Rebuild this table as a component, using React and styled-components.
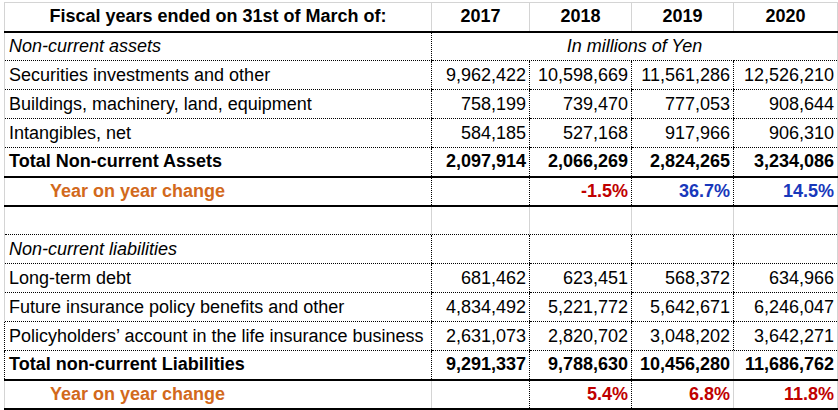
import styled, { createGlobalStyle } from "styled-components";

const GlobalStyle = createGlobalStyle`
  body {
    margin: 0;
    background: #fff;
    font-family: "Liberation Sans", Arial, sans-serif;
  }
`;

const GRID = "1px solid #d4d4d4";
const DOT = "1px dotted #000";
const THICK = "2px solid #000";

const Sheet = styled.div`
  padding: 2px 0 0 4px;
`;

const Table = styled.table`
  border-collapse: collapse;
  table-layout: fixed;
  width: 833px;
  font-size: 18px;
  color: #000;
`;

const Row = styled.tr`
  height: 29px;
`;

const Cell = styled.td`
  padding: 0 3px;
  white-space: nowrap;
  overflow: hidden;
  vertical-align: middle;
  border-left: ${(p) => p.$left || "none"};
  border-right: ${(p) => p.$right || "none"};
  border-bottom: ${(p) => p.$bottom || "none"};
  border-top: ${(p) => p.$top || "none"};
  font-weight: ${(p) => (p.$bold ? 700 : 400)};
`;

const HeadCell = styled(Cell)`
  text-align: center;
  font-weight: 700;
`;

const LabelCell = styled(Cell)`
  text-align: left;
  padding-left: ${(p) => (p.$indent ? "45px" : "4px")};
  font-style: ${(p) => (p.$italic ? "italic" : "normal")};
  color: ${(p) => p.$color || "#000"};
`;

const NoteCell = styled(Cell)`
  text-align: center;
  font-style: italic;
`;

const NumCell = styled(Cell)`
  text-align: right;
  color: ${(p) => p.$color || "#000"};
`;

const ORANGE = "#d2691c";
const RED = "#c00000";
const BLUE = "#1838bb";

const years = ["2017", "2018", "2019", "2020"];

// column borders, left of 2017 / 2018 / 2019 / 2020
const DOTS = [DOT, DOT, DOT, DOT];

const rows = [
  { type: "section", label: "Non-current assets", note: "In millions of Yen" },
  { type: "data", label: "Securities investments and other", values: ["9,962,422", "10,598,669", "11,561,286", "12,526,210"] },
  { type: "data", label: "Buildings, machinery, land, equipment", values: ["758,199", "739,470", "777,053", "908,644"] },
  { type: "data", label: "Intangibles, net", values: ["584,185", "527,168", "917,966", "906,310"] },
  { type: "total", label: "Total Non-current Assets", values: ["2,097,914", "2,066,269", "2,824,265", "3,234,086"] },
  { type: "change", label: "Year on year change", values: ["", "-1.5%", "36.7%", "14.5%"], colors: [null, RED, BLUE, BLUE] },
  { type: "spacer" },
  { type: "section", label: "Non-current liabilities", split: true },
  { type: "data", label: "Long-term debt", values: ["681,462", "623,451", "568,372", "634,966"] },
  { type: "data", label: "Future insurance policy benefits and other", values: ["4,834,492", "5,221,772", "5,642,671", "6,246,047"] },
  { type: "data", label: "Policyholders\u2019 account in the life insurance business", values: ["2,631,073", "2,820,702", "3,048,202", "3,642,271"], dotEdge: true },
  { type: "total", label: "Total non-current Liabilities", values: ["9,291,337", "9,788,630", "10,456,280", "11,686,762"], dotEdge: true, lefts: [DOT, DOT, DOT, GRID] },
  { type: "change", label: "Year on year change", values: ["", "5.4%", "6.8%", "11.8%"], colors: [null, RED, RED, RED], lefts: [GRID, DOT, DOT, GRID] },
];

const bottomFor = (type) => (type === "total" || type === "change" ? THICK : DOT);

const SheetRow = ({ row }) => {
  const bottom = bottomFor(row.type);
  const edge = row.dotEdge ? DOT : GRID;
  const lefts = row.lefts || DOTS;

  if (row.type === "spacer") {
    return (
      <Row>
        <LabelCell $left={GRID} $bottom={DOT} />
        {years.map((y, i) => (
          <NumCell key={y} $left={GRID} $right={i === 3 ? GRID : null} $bottom={DOT} />
        ))}
      </Row>
    );
  }

  if (row.type === "section" && !row.split) {
    return (
      <Row>
        <LabelCell $left={edge} $bottom={DOT} $italic>
          {row.label}
        </LabelCell>
        <NoteCell colSpan={4} $left={DOT} $right={GRID} $bottom={DOT}>
          {row.note}
        </NoteCell>
      </Row>
    );
  }

  const strong = row.type === "total" || row.type === "change";

  return (
    <Row>
      <LabelCell
        $left={edge}
        $bottom={bottom}
        $italic={row.type === "section"}
        $bold={strong}
        $indent={row.type === "change"}
        $color={row.type === "change" ? ORANGE : null}
      >
        {row.label}
      </LabelCell>
      {years.map((y, i) => (
        <NumCell
          key={y}
          $left={lefts[i]}
          $right={i === 3 ? GRID : null}
          $bottom={bottom}
          $bold={strong}
          $color={row.colors ? row.colors[i] : null}
        >
          {row.values ? row.values[i] : ""}
        </NumCell>
      ))}
    </Row>
  );
};

const App = () => {
  return (
    <>
      <GlobalStyle />
      <Sheet>
        <Table>
          <colgroup>
            <col style={{ width: 427 }} />
            <col style={{ width: 98 }} />
            <col style={{ width: 102 }} />
            <col style={{ width: 102 }} />
            <col style={{ width: 104 }} />
          </colgroup>
          <tbody>
            <Row>
              <HeadCell $left={GRID} $top={GRID} $bottom={THICK}>
                Fiscal years ended on 31st of March of:
              </HeadCell>
              {years.map((y, i) => (
                <HeadCell key={y} $left={GRID} $right={i === 3 ? GRID : null} $top={GRID} $bottom={THICK}>
                  {y}
                </HeadCell>
              ))}
            </Row>
            {rows.map((row, i) => (
              <SheetRow key={i} row={row} />
            ))}
          </tbody>
        </Table>
      </Sheet>
    </>
  );
};

export default App;
